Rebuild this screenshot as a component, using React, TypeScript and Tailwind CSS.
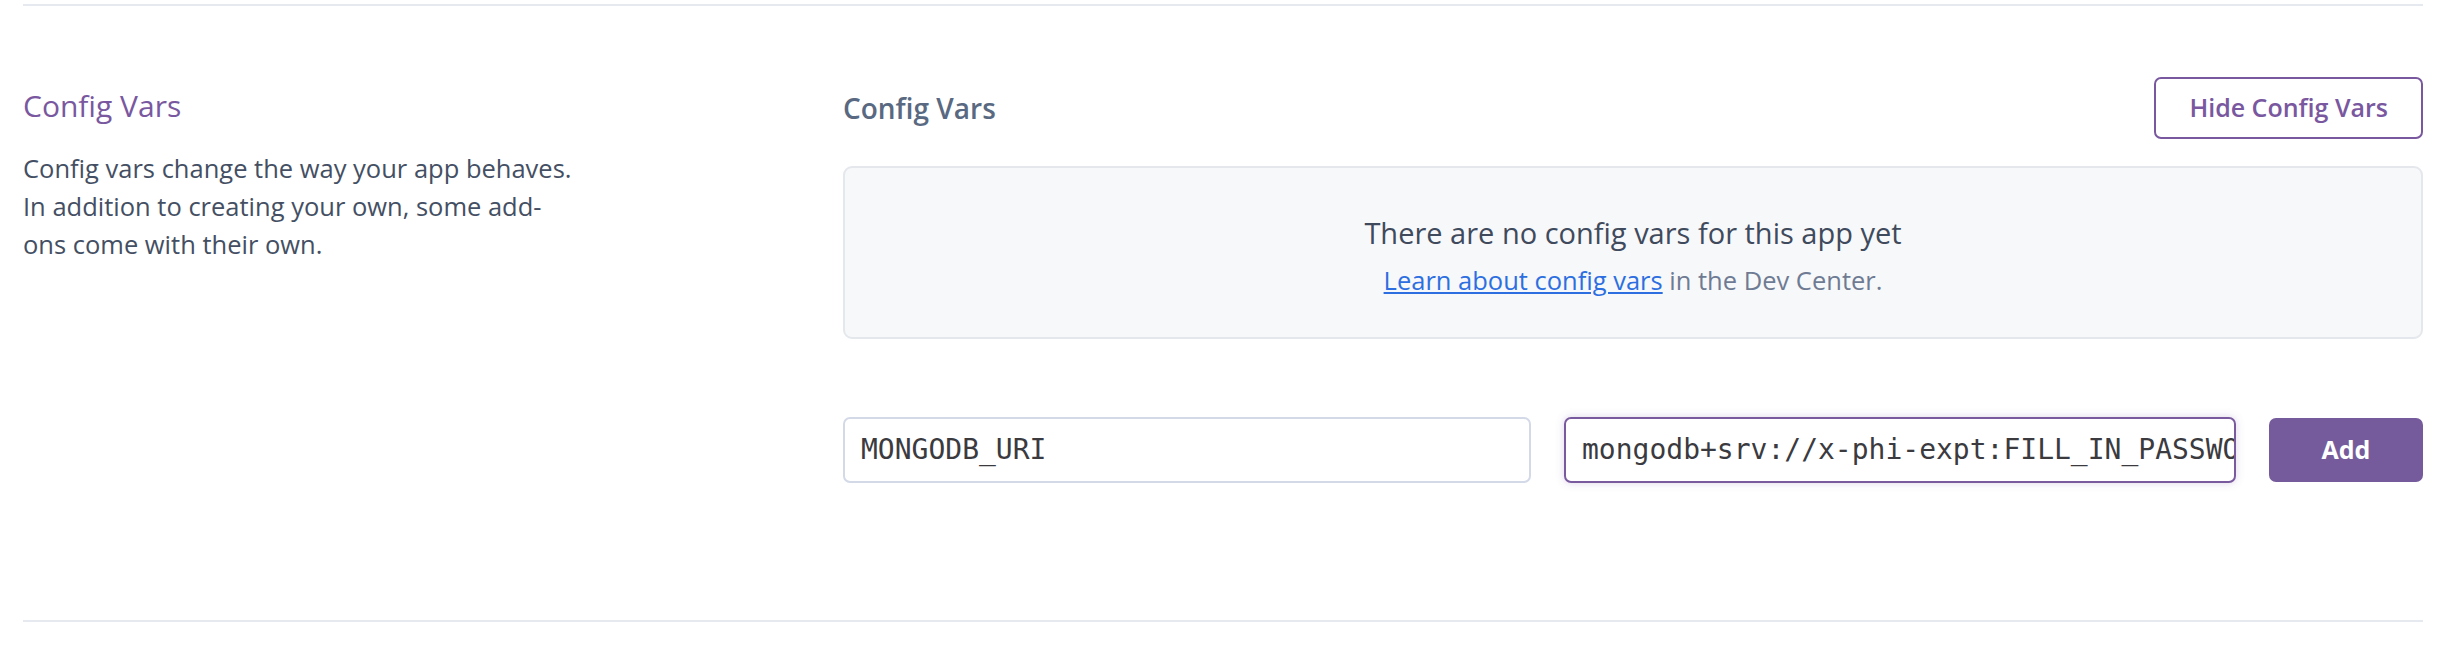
import React from "react";

const sans = { fontFamily: '"Open Sans", "Noto Sans", sans-serif' };

function FieldBox({ text, focused }: { text: string; focused?: boolean }) {
  return (
    <div
      className={
        "h-[66px] flex items-center overflow-hidden whitespace-nowrap rounded-[7px] border-2 bg-white pl-[16px] text-[28px] text-[#3b3b3f] " +
        (focused
          ? "w-[672px] border-[#7a5a9f] shadow-[0_0_8px_rgba(121,88,159,0.25)]"
          : "w-[688px] border-[#d3d9e7]")
      }
      style={{ fontFamily: '"DejaVu Sans Mono", "Liberation Mono", monospace' }}
    >
      {focused && <span className="inline-block h-[32px] w-[2px] bg-[#3b3b3f]" />}
      {text}
    </div>
  );
}

export default function App() {
  return (
    <div className="bg-white min-h-[662px]" style={sans}>
      <div className="ml-[23px] w-[2400px]">
        <div className="h-[2px] mt-[4px] bg-[#e6e9f0]" />

        <div className="flex pt-[71px] pb-[137px]">
          {/* left description */}
          <div className="w-[820px] mt-[11px]">
            <h2 className="text-[30px] leading-[36px] text-[#79589f]">Config Vars</h2>
            <p className="mt-[25px] text-[25.5px] leading-[38px] text-[#444f63]">
              Config vars change the way your app behaves.
              <br />
              In addition to creating your own, some add-
              <br />
              ons come with their own.
            </p>
          </div>

          {/* main column */}
          <div className="w-[1580px]">
            <div className="flex items-center justify-between h-[62px]">
              <h3 className="text-[28px] font-semibold text-[#596981]">Config Vars</h3>
              <button className="h-[62px] px-[33px] rounded-[7px] border-2 border-[#79589f] text-[25px] font-semibold text-[#79589f] bg-white">
                Hide Config Vars
              </button>
            </div>

            <div className="mt-[27px] h-[173px] rounded-[9px] border-2 border-[#e4e7ec] bg-[#f7f8fa] pt-[47px] text-center">
              <div className="text-[29px] leading-[36px] text-[#3f4a5c]">There are no config vars for this app yet</div>
              <div className="mt-[11px] text-[25.5px] leading-[36px] text-[#6e7b93]">
                <a href="#" className="text-[#2d6fe0] underline">Learn about config vars</a> in the Dev Center.
              </div>
            </div>

            <div className="mt-[78px] flex items-center gap-[33px]">
              <FieldBox text="MONGODB_URI" />
              <FieldBox text="mongodb+srv://x-phi-expt:FILL_IN_PASSWORD" focused />
              <button className="w-[154px] h-[64px] rounded-[7px] bg-[#765b9c] text-white text-[25px] font-bold">
                Add
              </button>
            </div>
          </div>
        </div>

        <div className="h-[2px] bg-[#e6e9f0]" />
      </div>
    </div>
  );
}
